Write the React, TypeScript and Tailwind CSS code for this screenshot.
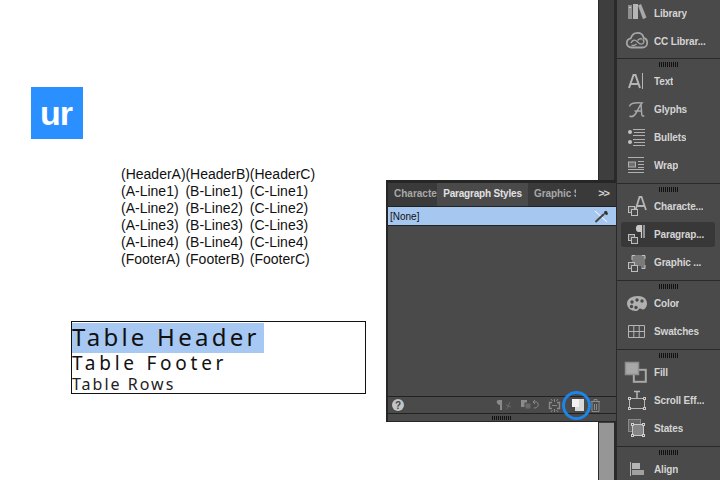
import type { ReactNode } from "react"

const sans = "font-['Liberation_Sans',Arial,sans-serif]"
const noto = "font-['Noto_Sans',sans-serif]"

const columns = [
  ["(HeaderA)", "(A-Line1)", "(A-Line2)", "(A-Line3)", "(A-Line4)", "(FooterA)"],
  ["(HeaderB)", "(B-Line1)", "(B-Line2)", "(B-Line3)", "(B-Line4)", "(FooterB)"],
  ["(HeaderC)", "(C-Line1)", "(C-Line2)", "(C-Line3)", "(C-Line4)", "(FooterC)"],
]

function Svg({ children }: { children: ReactNode }) {
  return (
    <svg width="22" height="22" viewBox="0 0 22 22" fill="none" className="shrink-0 overflow-visible">
      {children}
    </svg>
  )
}

const StyleSquares = () => (
  <g stroke="#bdbdbd" strokeWidth="1">
    <rect x="2.500" y="11.500" width="6" height="6" fill="#5a5a5a" />
    <rect x="5.500" y="14.500" width="6" height="6" fill="#4a4a4a" />
  </g>
)

const icons: Record<string, ReactNode> = {
  library: (
    <Svg>
      <rect x="2" y="3" width="4" height="14" fill="#8f8f8f" />
      <rect x="3" y="5" width="2" height="1" fill="#c8c8c8" />
      <rect x="7" y="2" width="5" height="15" fill="#b5b5b5" />
      <path d="M12 3.500l3-1.500 5.500 13.500-3.500 1.700z" fill="#a8a8a8" />
    </Svg>
  ),
  cc: (
    <Svg>
      <path d="M5.500 17.500C2.500 17.500.8 15.500.8 13s1.700-4.300 4-4.700C5.800 5 8.500 2.800 11.500 2.800c3.500 0 5.700 2.500 6.200 5.200 2.200.5 3.500 2.300 3.500 4.700 0 2.700-2 4.800-4.700 4.800z" stroke="#a5a5a5" strokeWidth="1.800" />
      <path d="M5 13c1.500-3.500 4-3.500 6-1.500s3.500 4 6 2c1.500-1.500 1-3.500-.5-4M5.500 15c1.500 1 3 .8 5-1M11.500 10.500c1.500-1.500 3-2 4.500-1.500" stroke="#a5a5a5" strokeWidth="1.400" />
    </Svg>
  ),
  text: (
    <Svg>
      <path d="M3 18l4.500-13h2L14 18M5 14h7" stroke="#b5b5b5" strokeWidth="2" />
      <path d="M16.500 3v16" stroke="#b5b5b5" />
    </Svg>
  ),
  glyphs: (
    <Svg>
      <path d="M3.500 8.500C4 5 9 4.500 16 5c-2.500 2.500-4 7-6 10-1.500 2.500-4 4.500-6.500 3M8.500 13h6.500M15 6l.8 11c.2 1.200 1.200 1.200 2.500.8" stroke="#a8a8a8" strokeWidth="1.500" />
    </Svg>
  ),
  bullets: (
    <Svg>
      <circle cx="4" cy="6" r="2" fill="#c2c2c2" />
      <circle cx="4" cy="16" r="2" fill="#c2c2c2" />
      <path d="M7 3.500h12M8 6.500h11M7 9.500h12M7 13.500h12M8 16.500h11M7 19.500h12" stroke="#b0b0b0" />
    </Svg>
  ),
  wrap: (
    <Svg>
      <path d="M2 3.500h16M2 18.500h16M12 7.500h6M12 10.500h6M12 13.500h6M2 15.500h16" stroke="#b0b0b0" />
      <rect x="2.500" y="8" width="7" height="5" stroke="#b0b0b0" fill="#707070" />
    </Svg>
  ),
  character: (
    <Svg>
      <path d="M9.500 15L13.500 2h2l4.500 13M11.500 11h7" stroke="#b5b5b5" strokeWidth="1.800" />
      <StyleSquares />
    </Svg>
  ),
  paragraph: (
    <Svg>
      <path d="M15.500 2v13M18 2v13" stroke="#d0d0d0" strokeWidth="1.200" />
      <path d="M15 2h-2.500C9 2 9 9 12.500 9H15z" fill="#c8c8c8" />
      <StyleSquares />
    </Svg>
  ),
  graphic: (
    <Svg>
      <rect x="6" y="4" width="13" height="14" fill="#7a7a7a" />
      <path d="M6 9V4.500h3M16 4.500h3V8M19 14v3.500h-3" stroke="#c2c2c2" />
      <rect x="11" y="15" width="4" height="4" fill="#4a4a4a" />
      <StyleSquares />
    </Svg>
  ),
  color: (
    <Svg>
      <path d="M12 4C5.500 4 1 7 1 11.500 1 16 5 19 10 19c2.500 0 2.500-2.500 4-2.500 2 0 2 1.500 3.500 1 2.500-1 3.500-3.500 3.500-6C21 7 17.500 4 12 4z" fill="#b0b0b0" />
      <circle cx="6" cy="10" r="1.700" fill="#4a4a4a" />
      <circle cx="11" cy="8" r="1.700" fill="#4a4a4a" />
      <circle cx="5.500" cy="14.500" r="1.700" fill="#4a4a4a" />
      <circle cx="10" cy="15.500" r="1.700" fill="#4a4a4a" />
      <circle cx="16" cy="9" r="1.700" fill="#4a4a4a" />
    </Svg>
  ),
  swatches: (
    <Svg>
      <path d="M2.500 5.500h16v12h-16zM2.500 11.500h16M7.800 5.500v12M13.200 5.500v12" stroke="#b5b5b5" />
    </Svg>
  ),
  fill: (
    <Svg>
      <rect x="7.800" y="8.800" width="12" height="12" stroke="#a8a8a8" strokeWidth="2" fill="#4a4a4a" />
      <rect x="-.5" y="1.500" width="13" height="12" stroke="#8f8f8f" strokeWidth="1.500" fill="#a8a8a8" />
    </Svg>
  ),
  scroll: (
    <Svg>
      <path d="M8 2.500h6M11 3v6" stroke="#b5b5b5" strokeWidth="1.500" />
      <rect x="3.500" y="9.500" width="15" height="10" stroke="#b5b5b5" />
      <g fill="#4a4a4a" stroke="#c8c8c8">
        <rect x="2.500" y="8.500" width="2" height="2" />
        <rect x="17.500" y="8.500" width="2" height="2" />
        <rect x="2.500" y="18.500" width="2" height="2" />
        <rect x="17.500" y="18.500" width="2" height="2" />
      </g>
    </Svg>
  ),
  states: (
    <Svg>
      <rect x="2.500" y="2.500" width="12" height="12" stroke="#8a8a8a" fill="#666" />
      <rect x="6.500" y="7.500" width="11" height="11" stroke="#c8c8c8" fill="#858585" />
      <g fill="#4a4a4a" stroke="#d0d0d0">
        <rect x="5.500" y="6.500" width="2" height="2" />
        <rect x="16.500" y="6.500" width="2" height="2" />
        <rect x="5.500" y="17.500" width="2" height="2" />
        <rect x="16.500" y="17.500" width="2" height="2" />
      </g>
    </Svg>
  ),
  align: (
    <Svg>
      <path d="M4.500 4v14" stroke="#b5b5b5" />
      <rect x="6" y="5" width="8" height="6" fill="#b5b5b5" />
      <rect x="6" y="12" width="12" height="5" fill="#a0a0a0" />
    </Svg>
  ),
}

function Gripper() {
  return <div className="mx-auto h-[5px] w-5 bg-[repeating-linear-gradient(90deg,#111_0_1px,#4a4a4a_1px_2px)]" />
}

function Item({ icon, label, active }: { icon: string; label: string; active?: boolean }) {
  return (
    <div className="flex h-7 items-center px-1">
      <div className={`flex h-[25px] w-[94px] items-center rounded-[3px] pl-[5px] ${active ? "bg-[#383838]" : ""}`}>
        {icons[icon]}
        <span className={`ml-[6px] truncate text-[10px] font-bold tracking-[-0.15px] text-[#d4d4d4] ${sans}`}>{label}</span>
      </div>
    </div>
  )
}

function Group({ children, last }: { children: ReactNode; last?: boolean }) {
  return (
    <div className={`flex flex-col ${last ? "" : "border-b border-[#2a2a2a] pb-1"}`}>
      <div className="h-2 pt-[3px]">
        <Gripper />
      </div>
      {children}
    </div>
  )
}

function Sidebar() {
  return (
    <aside className="flex h-[480px] w-[106px] shrink-0 flex-col overflow-hidden border-l-[3px] border-[#2a2a2a] bg-[#4a4a4a]">
      <div className="-mt-px flex flex-col border-b border-[#2a2a2a] pb-[3px]">
        <Item icon="library" label="Library" />
        <Item icon="cc" label="CC Librar..." />
      </div>
      <Group>
        <Item icon="text" label="Text" />
        <Item icon="glyphs" label="Glyphs" />
        <Item icon="bullets" label="Bullets" />
        <Item icon="wrap" label="Wrap" />
      </Group>
      <Group>
        <Item icon="character" label="Characte..." />
        <Item icon="paragraph" label="Paragrap..." active />
        <Item icon="graphic" label="Graphic ..." />
      </Group>
      <Group>
        <Item icon="color" label="Color" />
        <Item icon="swatches" label="Swatches" />
      </Group>
      <Group>
        <Item icon="fill" label="Fill" />
        <Item icon="scroll" label="Scroll Eff..." />
        <Item icon="states" label="States" />
      </Group>
      <Group last>
        <Item icon="align" label="Align" />
      </Group>
    </aside>
  )
}

function StylesPanel() {
  return (
    <div className="absolute left-[386px] top-[180px] flex h-[242px] w-[230px] flex-col border-b border-l-2 border-t-[3px] border-[#262626] bg-[#4a4a4a]">
      <div className="flex h-[23px] shrink-0 items-center bg-[#3a3a3a]">
        <div className={`w-[49px] overflow-hidden whitespace-nowrap pb-[2px] pl-[6px] text-[10px] font-bold text-[#a8a8a8] ${sans}`}>Characte</div>
        <div className={`flex h-[23px] w-[91px] items-center justify-center bg-[#4a4a4a] pb-[2px] text-[10px] font-bold tracking-[-0.2px] text-[#e2e2e2] ${sans}`}>Paragraph Styles</div>
        <div className={`ml-[6px] w-[42px] overflow-hidden whitespace-nowrap pb-[2px] text-[10px] font-bold tracking-[-0.1px] text-[#a8a8a8] ${sans}`}>Graphic Styles</div>
        <div className={`ml-auto pb-[2px] pr-[7px] text-[11px] font-bold tracking-[-1px] text-[#d0d0d0] ${sans}`}>&gt;&gt;</div>
      </div>
      <div className="box-content flex h-[18px] shrink-0 items-center justify-between border-y border-[#222] bg-[#a6c7ef] pl-[2px] pr-[8px]">
        <span className={`text-[10px] text-[#111] ${sans}`}>[None]</span>
        <svg width="14" height="13" viewBox="0 0 14 13" fill="none">
          <path d="M1 1l12 11" stroke="#fff" />
          <path d="M13 1.500l-2.500 2.500M10.500 1.500l3 3" stroke="#333" strokeWidth="2" />
          <path d="M10 4L3 10.500 1.500 12" stroke="#444" strokeWidth="2" />
        </svg>
      </div>
      <div className="flex-1" />
      <div className="flex h-[17px] shrink-0 items-center border-t border-[#222] pl-1">
        <span className={`flex h-3 w-3 items-center justify-center rounded-full bg-[#c4c4c4] text-[10px] font-bold text-[#444] ${sans}`}>?</span>
        <div className="ml-[91px] flex items-center">
          <svg width="17" height="12" viewBox="0 0 17 12" fill="none">
            <path d="M4 1h3v10H5V6C2 6 0 1 4 1z" fill="#8a8a8a" />
            <path d="M11 6l5 2M15 3l-3 7" stroke="#6a6a6a" />
          </svg>
          <svg width="18" height="12" viewBox="0 0 18 12" fill="none" className="ml-[9px]">
            <rect x="0" y="1" width="6" height="7" fill="#8a8a8a" />
            <rect x="4" y="4" width="6" height="6" fill="#6a6a6a" stroke="#4a4a4a" />
            <path d="M12 3h3c3 0 3 6-1 6h-1M12 3l2-2M12 3l2 2" stroke="#8a8a8a" />
          </svg>
          <svg width="13" height="13" viewBox="0 0 13 13" fill="none" className="ml-[9px]">
            <path d="M4 3.500H1.500v6H4M9 3.500h2.500v6H9" stroke="#8a8a8a" strokeWidth="1.400" />
            <path d="M6.500 0v3M6.500 10v3M3 0l1.500 2M10 0L8.500 2M3 13l1.500-2M10 13l-1.500-2M4 6.500h5" stroke="#8a8a8a" />
          </svg>
          <svg width="13" height="12" viewBox="0 0 13 12" className="ml-[10px]">
            <path d="M1 0h12v12H4V8H1z" fill="#d8d8d8" />
            <path d="M1 0h7v8H1z" fill="#f2f2f2" />
          </svg>
          <svg width="9" height="13" viewBox="0 0 9 13" fill="none" className="ml-[7px]">
            <path d="M0 2.500h9M3 2.500V.5h3v2M1 3v9.500h7V3M3.500 5v6M5.500 5v6" stroke="#8a8a8a" />
          </svg>
        </div>
      </div>
      <div className="flex h-2 shrink-0 items-center border-t border-[#222]">
        <div className="mx-auto h-[4px] w-5 bg-[repeating-linear-gradient(90deg,#111_0_1px,#4a4a4a_1px_2px)]" />
      </div>
      {/* callout round the new style button */}
      <div className="absolute left-[174px] top-[208px] h-[29px] w-[29px] rounded-full border-[3px] border-[#1d84e8]" />
    </div>
  )
}

export default function App() {
  return (
    <div className="relative flex h-[480px] w-[720px] overflow-hidden bg-white">
      <main className="relative flex-1">
        <div className={`absolute left-[31px] top-[87px] flex h-[52px] w-[52px] items-center justify-center bg-[#2b90ff] pr-[2px] text-[34px] font-bold tracking-[-1px] text-white ${sans}`}>ur</div>
        <div className={`absolute left-[121px] top-[166px] flex text-[14px] leading-[17px] text-[#111] ${sans}`}>
          {columns.map((col) => (
            <div key={col[0]} className="w-[64.4px] whitespace-nowrap">
              {col.map((t) => (
                <div key={t}>{t}</div>
              ))}
            </div>
          ))}
        </div>
        <div className={`absolute left-[71px] top-[321px] h-[73px] w-[295px] border border-[#111] pt-px text-[#111] ${noto}`}>
          <div className="h-[30px] w-[192px] whitespace-nowrap bg-[#a6c8f2] text-[24px] leading-[27px] tracking-[3.25px]">Table Header</div>
          <div className="mb-[2px] whitespace-nowrap text-[19px] font-[450] leading-[21px] tracking-[3.75px]">Table Footer</div>
          <div className="whitespace-nowrap text-[16px] leading-[16px] tracking-[2px] text-[#222]">Table Rows</div>
        </div>
      </main>
      <div className="flex w-4 shrink-0 flex-col border-l border-[#2a2a2a] bg-[#3e3e3e]">
        <div className="mt-auto h-[57px] bg-[#969696]" />
      </div>
      <Sidebar />
      <StylesPanel />
    </div>
  )
}
